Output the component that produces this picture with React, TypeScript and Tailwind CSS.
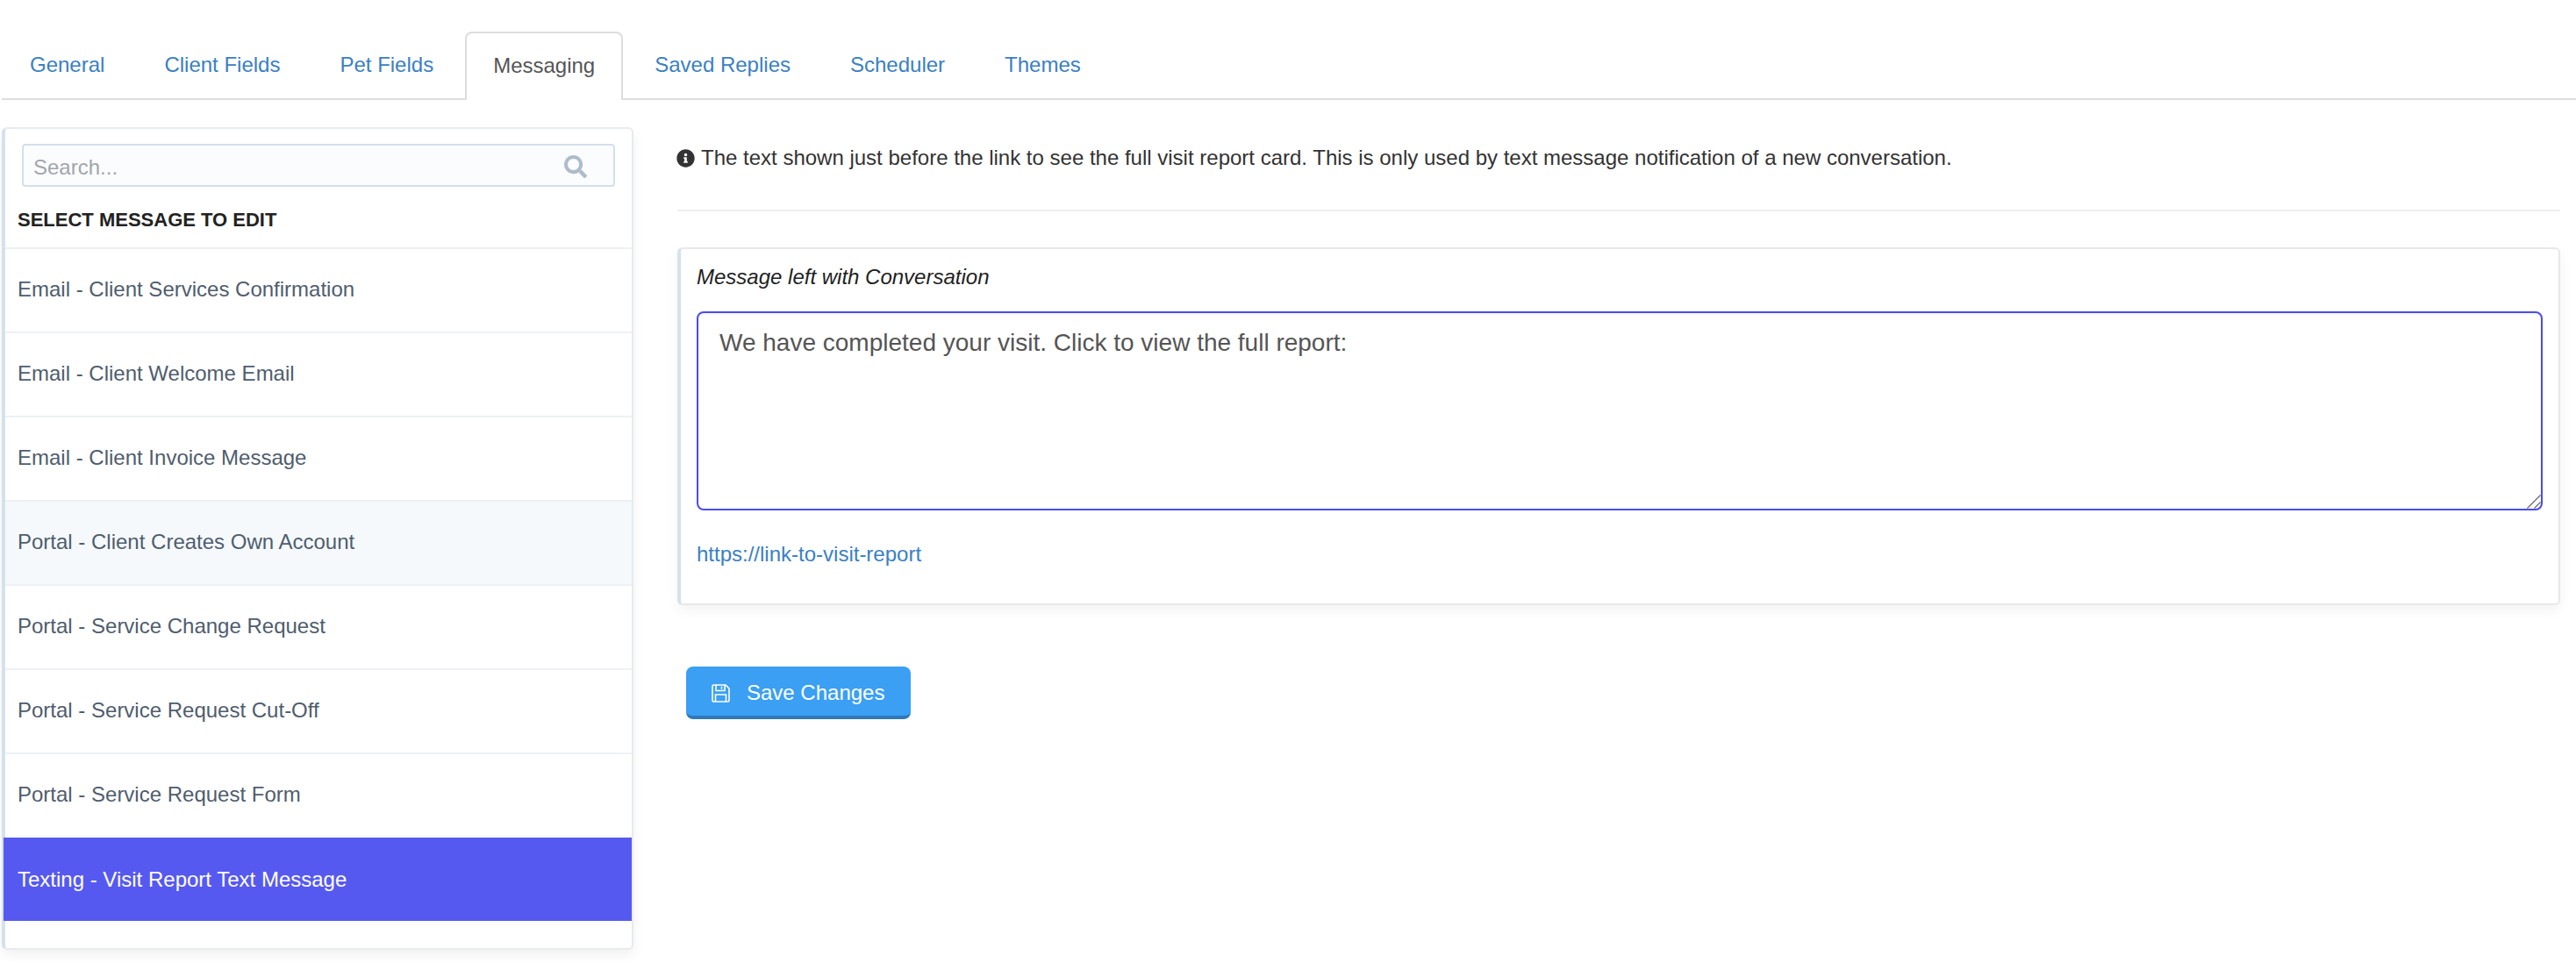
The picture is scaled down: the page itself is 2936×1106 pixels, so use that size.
import { FaInfoCircle, FaSearch } from 'react-icons/fa'

const tabs = ['General', 'Client Fields', 'Pet Fields', 'Messaging', 'Saved Replies', 'Scheduler', 'Themes']

const messages = [
  'Email - Client Services Confirmation',
  'Email - Client Welcome Email',
  'Email - Client Invoice Message',
  'Portal - Client Creates Own Account',
  'Portal - Service Change Request',
  'Portal - Service Request Cut-Off',
  'Portal - Service Request Form',
  'Texting - Visit Report Text Message',
]

export default function App() {
  return (
    <div className="min-h-screen bg-white font-['Liberation_Sans',Arial,sans-serif] text-[24px] text-[#333]">
      <nav className="ml-[2px] flex h-[114px] gap-[4px] border-b-2 border-[#ddd] pt-[36px]">
        {tabs.map((tab) =>
          tab === 'Messaging' ? (
            <a key={tab} className="-mb-[2px] flex h-[78px] items-center rounded-t-[8px] border-2 border-b-0 border-[#ddd] bg-white px-[30px] pb-[2px] text-[#555]">
              {tab}
            </a>
          ) : (
            <a key={tab} className="flex h-[76px] items-center px-[32px] text-[#3a80c4]">
              {tab}
            </a>
          ),
        )}
      </nav>

      <div className="flex items-start">
        <aside className="mt-[31px] ml-[2px] h-[938px] w-[720px] shrink-0 rounded-[6px] border-2 border-l-[4px] border-[#e8ebee] border-l-[#d5e1ec] bg-white shadow-[0_6px_14px_rgba(0,0,0,0.06)]">
          <div className="pt-[17px] pl-[19px]">
            <div className="flex h-[49px] w-[676px] items-center justify-between rounded-[4px] border-2 border-[#d3e0ec] bg-[#fbfcfd] pt-[2px] pr-[30px] pl-[11px]">
              <span className="mt-[3px] text-[#a0a6ad]">Search...</span>
              <FaSearch className="h-[26px] w-[26px] text-[#aebccb]" />
            </div>
          </div>
          <h3 className="mt-[25px] ml-[14px] h-[44px] text-[22px] leading-[26px] font-bold text-[#222]">SELECT MESSAGE TO EDIT</h3>
          <ul>
            {messages.map((message, i) => (
              <li
                key={message}
                className={
                  i === 7
                    ? 'mt-[1px] -ml-[2px] flex h-[95px] items-center bg-[#5659f0] pl-[16px] text-white'
                    : `flex h-[96px] items-center border-t-2 border-[#eef1f4] pb-[2px] pl-[14px] text-[#4f5d6e] ${i === 3 ? 'bg-[#f5f9fc]' : ''}`
                }
              >
                {message}
              </li>
            ))}
          </ul>
        </aside>

        <main className="mt-[48px] ml-[50px] w-[2146px] shrink-0">
          <p className="flex h-[36px] items-center gap-[7px] text-[#333]">
            <FaInfoCircle className="-ml-[1px] h-[21px] w-[21px]" />
            The text shown just before the link to see the full visit report card. This is only used by text message notification of a new conversation.
          </p>
          <hr className="mt-[41px] border-t-2 border-[#eee]" />

          <section className="mt-[41px] h-[408px] rounded-[6px] border-2 border-l-[4px] border-[#e8e8e8] border-l-[#d5e1ec] bg-white pt-[15px] pr-[18px] pl-[18px] shadow-[0_6px_14px_rgba(0,0,0,0.05)]">
            <label className="block h-[56px] text-[24px] leading-[34px] text-[#222] italic">Message left with Conversation</label>
            <div className="relative">
              <textarea
                className="block h-[227px] w-full resize-none rounded-[8px] border-2 border-[#4a4de8] px-[24px] pt-[14px] pb-[10px] text-[28px] leading-[40px] text-[#555] shadow-[inset_0_2px_2px_rgba(0,0,0,0.04)] outline-none"
                defaultValue="We have completed your visit. Click to view the full report:"
              />
              <svg className="absolute right-[2px] bottom-[2px] h-[16px] w-[16px]" viewBox="0 0 16 16" fill="none" stroke="#666" strokeWidth="1.2">
                <path d="M0.5 15.5 15.5 0.5M8.5 15.5 15.5 8.5" />
              </svg>
            </div>
            <a className="mt-[33px] block text-[24px] leading-[34px] text-[#3a80c4]">https://link-to-visit-report</a>
          </section>

          <button className="mt-[70px] ml-[10px] flex h-[60px] w-[256px] items-center gap-[19px] rounded-[8px] border-b-[4px] border-[#2f78b9] bg-[#3b9ff3] pt-[4px] pl-[29px] text-[24px] text-white">
            <svg className="h-[21px] w-[21px]" viewBox="0 0 21 21" fill="none" stroke="currentColor" strokeWidth="1.6">
              <path d="M1 2.5C1 1.6 1.6 1 2.5 1H16L20 5V18.5C20 19.4 19.4 20 18.5 20H2.5C1.6 20 1 19.4 1 18.5Z" />
              <path d="M5 1V7.5H15V1M11.5 2.8V5.8M4.5 20V12H16.5V20" />
            </svg>
            Save Changes
          </button>
        </main>
      </div>
    </div>
  )
}
